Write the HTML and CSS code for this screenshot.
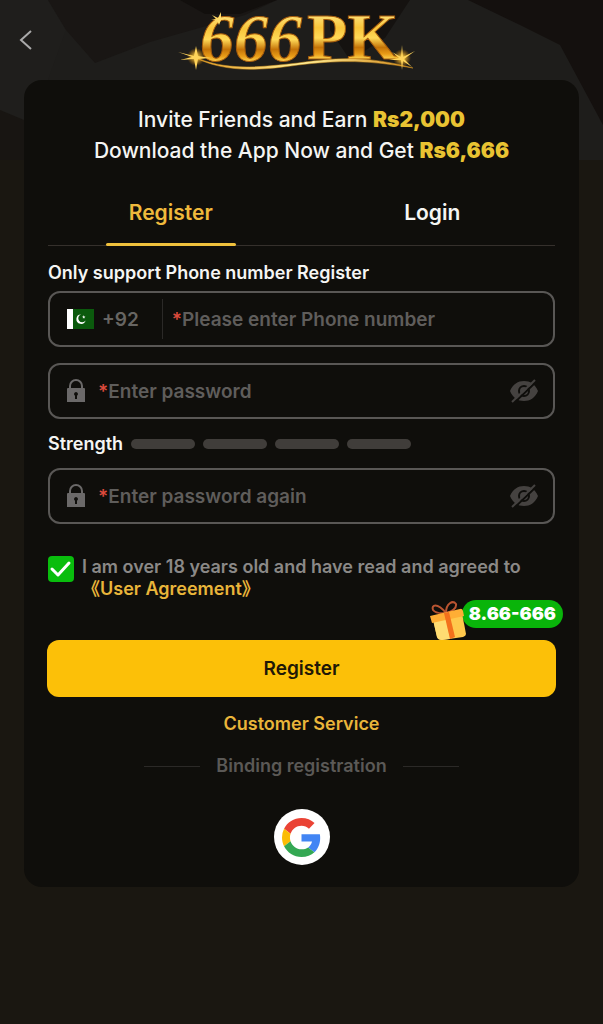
FILE: index.html
```html
<!DOCTYPE html>
<html lang="en">
  <head>
    <meta charset="UTF-8" />
    <meta name="viewport" content="width=device-width, initial-scale=1.0" />
    <title>666PK - Register</title>
    <link rel="stylesheet" href="styles.css">
  </head>
  <body>
    <svg class="backdrop" viewBox="0 0 603 160" preserveAspectRatio="none" aria-hidden="true">
      <rect width="603" height="160" fill="#1e1d1b"/>
      <path d="M0 0H48L66 30L48 80L24 130L0 110Z" fill="#1f1e1c"/>
      <path d="M48 0H277L245 15L150 42L95 63L66 30Z" fill="#191614"/>
      <path d="M180 0H277L240 14L205 14Z" fill="#120f0d"/>
      <path d="M330 0H410L385 38L350 60L330 30Z" fill="#151210"/>
      <path d="M468 0H603V125L560 45L520 25Z" fill="#14100e"/>
      <path d="M0 110L24 120V160H0Z" fill="#181512"/>
    </svg>

    <header class="header">
      <button class="back" aria-label="Back">
        <svg width="14" height="22" viewBox="0 0 14 22"><path d="M12 2L2 11L12 20" fill="none" stroke="#aaa" stroke-width="2"/></svg>
      </button>
      <svg class="logo" width="244" height="80" viewBox="0 0 244 80" role="img" aria-label="666PK">
        <defs>
          <linearGradient id="gold" x1="0" y1="0" x2="0" y2="1">
            <stop offset="0.15" stop-color="#ffe98a"/>
            <stop offset="0.38" stop-color="#f9c53a"/>
            <stop offset="0.52" stop-color="#ffd957"/>
            <stop offset="0.65" stop-color="#c57408"/>
            <stop offset="0.74" stop-color="#e99c17"/>
            <stop offset="0.82" stop-color="#ffdc59"/>
          </linearGradient>
          <linearGradient id="swoosh">
            <stop offset="0" stop-color="#e79b1f"/>
            <stop offset="0.5" stop-color="#fff09a"/>
            <stop offset="1" stop-color="#d48b1c"/>
          </linearGradient>
          <radialGradient id="glow">
            <stop offset="0" stop-color="#fff3a0"/>
            <stop offset="0.3" stop-color="#ffc93c" stop-opacity="0.8"/>
            <stop offset="1" stop-color="#e68a00" stop-opacity="0"/>
          </radialGradient>
        </defs>
        <text class="logo-digits" x="20" y="61">666</text>
        <text class="logo-letters" x="127" y="59">PK</text>
        <path d="M10 55C45 72 80 67 118 63C158 57 188 56 233 68C188 60 160 60 118 65C78 71 42 73 10 55Z" fill="url(#swoosh)" stroke="#dc9a24" stroke-width="0.5"/>
        <circle cx="16" cy="57" r="9" fill="url(#glow)"/>
        <path d="M-2 52L14 56L16 46L18 56L31 58L18 59L16 70L14 59L0 60L12 57Z" fill="#ffd45a"/>
        <circle cx="222" cy="58" r="9" fill="url(#glow)"/>
        <path d="M212 52L221 57L222 45L223 57L235 51L224 59L232 67L223 61L222 70L221 60L209 60L219 58Z" fill="#ffd45a"/>
        <path d="M32 15L38 18L41 12L41 18L47 19L41 20L39 25L37 20L31 20L36 19Z" fill="#ffdc69"/>
      </svg>
    </header>

    <main class="card">
      <div class="promo">
        <p>Invite Friends and Earn <b>Rs2,000</b></p>
        <p>Download the App Now and Get <b>Rs6,666</b></p>
      </div>

      <div class="tabs">
        <button class="tab active">Register</button>
        <button class="tab">Login</button>
      </div>

      <form>
        <label class="title" for="phone">Only support Phone number Register</label>
        <div class="field">
          <div class="country">
            <svg width="27" height="20" viewBox="0 0 27 20" aria-hidden="true">
              <rect width="27" height="20" fill="#0b5a0d"/>
              <rect width="6" height="20" fill="#fff"/>
              <path d="M14 5.5A4.7 4.7 0 1 0 18.6 11.5A4 4 0 1 1 14 5.5Z" fill="#fff"/>
              <path d="M16.5 6L17.1 7.4L18.4 7.2L17.5 8.2L18 9.4L16.8 8.8L15.9 9.7L16.1 8.4L15 7.8L16.3 7.5Z" fill="#fff"/>
            </svg>
            <span>+92</span>
          </div>
          <span class="star">*</span>
          <input id="phone" type="tel" placeholder="Please enter Phone number">
        </div>

        <div class="field password">
          <svg class="lock" width="18" height="24" viewBox="0 0 18 24" aria-hidden="true">
            <path d="M3 10V7A6 6 0 0 1 15 7V10" fill="none" stroke="#6b6969" stroke-width="2"/>
            <path d="M1 9H17Q18 9 18 10V23H0V10Q0 9 1 9ZM9 13A2 2 0 0 0 8 16.7V20H10V16.7A2 2 0 0 0 9 13Z" fill="#6b6969"/>
          </svg>
          <span class="star">*</span>
          <input type="password" placeholder="Enter password" aria-label="Enter password">
          <button type="button" class="eye" aria-label="Show password">
            <svg width="30" height="24" viewBox="0 0 30 24">
              <mask id="slash">
                <rect width="30" height="24" fill="#fff"/>
                <path d="M4.5 24.5L27.5 2.5" stroke="#000" stroke-width="2"/>
              </mask>
              <g mask="url(#slash)" fill="#454240">
                <path fill-rule="evenodd" d="M1 12C4 5 9 2 15 2S26 5 29 12C26 19 21 22 15 22S4 19 1 12ZM15 6A6 6 0 1 0 15 18A6 6 0 0 0 15 6Z"/>
                <circle cx="15" cy="12" r="4"/>
              </g>
              <path d="M3 23L26 1" stroke="#454240" stroke-width="2"/>
            </svg>
          </button>
        </div>

        <div class="strength">
          <span>Strength</span>
          <i></i><i></i><i></i><i></i>
        </div>

        <div class="field">
          <svg class="lock" width="18" height="24" viewBox="0 0 18 24" aria-hidden="true">
            <path d="M3 10V7A6 6 0 0 1 15 7V10" fill="none" stroke="#6b6969" stroke-width="2"/>
            <path d="M1 9H17Q18 9 18 10V23H0V10Q0 9 1 9ZM9 13A2 2 0 0 0 8 16.7V20H10V16.7A2 2 0 0 0 9 13Z" fill="#6b6969"/>
          </svg>
          <span class="star">*</span>
          <input type="password" placeholder="Enter password again" aria-label="Enter password again">
          <button type="button" class="eye" aria-label="Show password">
            <svg width="30" height="24" viewBox="0 0 30 24">
              <g mask="url(#slash)" fill="#454240">
                <path fill-rule="evenodd" d="M1 12C4 5 9 2 15 2S26 5 29 12C26 19 21 22 15 22S4 19 1 12ZM15 6A6 6 0 1 0 15 18A6 6 0 0 0 15 6Z"/>
                <circle cx="15" cy="12" r="4"/>
              </g>
              <path d="M3 23L26 1" stroke="#454240" stroke-width="2"/>
            </svg>
          </button>
        </div>

        <div class="agree">
          <span class="check">
            <input type="checkbox" id="agree" checked>
            <svg width="26" height="26" viewBox="0 0 26 26" aria-hidden="true"><path d="M4 13L10 19L21 7" fill="none" stroke="#fff" stroke-width="3" stroke-linecap="round" stroke-linejoin="round"/></svg>
          </span>
          <div>
            <label for="agree">I am over 18 years old and have read and agreed to</label>
            <a href="#">《User Agreement》</a>
          </div>
        </div>

        <div class="submit">
          <button type="submit" class="register-btn">Register</button>
          <div class="bonus">
            <svg width="38" height="40" viewBox="0 0 38 40" aria-hidden="true">
              <g fill="none" stroke="#b95431" stroke-width="2">
                <path d="M17 13C8 2 2 5 4 10Q7 14 17 13Z"/>
                <path d="M17 13C17 3 24 0 27 4Q28 10 17 13Z"/>
              </g>
              <path d="M4 19L33 13L37 34Q37 36 34 37L13 40Q9 40 8 37Z" fill="#ffc84c"/>
              <path d="M4 20L17 18L21 39L13 40Q9 40 8 37Z" fill="#ffdc72"/>
              <path d="M1 16L31 9Q33 8 34 11L35 16L3 23Z" fill="#ffae35"/>
              <path d="M15 13L20 12L26 37L21 39Z" fill="#f3701c"/>
            </svg>
            <span>8.66-666</span>
          </div>
        </div>
      </form>

      <a class="service" href="#">Customer Service</a>
      <div class="binding"><span>Binding registration</span></div>
      <button class="google" aria-label="Register with Google">
        <svg width="39" height="39" viewBox="0 0 48 48">
          <path fill="#ea4335" d="M24 9.5c3.54 0 6.71 1.22 9.21 3.6l6.85-6.85C35.9 2.38 30.47 0 24 0 14.62 0 6.51 5.38 2.56 13.22l7.98 6.19C12.43 13.72 17.74 9.5 24 9.5z"/>
          <path fill="#4285f4" d="M46.98 24.55c0-1.57-.15-3.09-.38-4.55H24v9.02h12.94c-.58 2.96-2.26 5.48-4.78 7.18l7.73 6c4.51-4.18 7.09-10.36 7.09-17.65z"/>
          <path fill="#fbbc05" d="M10.53 28.59A14.5 14.5 0 0 1 9.77 24c0-1.6.27-3.14.76-4.59l-7.98-6.19A23.9 23.9 0 0 0 0 24c0 3.88.92 7.54 2.56 10.78z"/>
          <path fill="#34a853" d="M24 48c6.48 0 11.93-2.13 15.89-5.81l-7.73-6C30.01 37.64 27.24 38.49 24 38.49c-6.26 0-11.57-4.22-13.47-9.9l-7.98 6.19C6.51 42.62 14.62 48 24 48z"/>
        </svg>
      </button>
    </main>
  </body>
</html>
```

FILE: styles.css
```css
* {
  margin: 0;
  padding: 0;
  box-sizing: border-box;
}

body {
  min-height: 100vh;
  background: #1a1711;
  font-family: Inter, "Noto Sans CJK SC", sans-serif;
  font-size: 18px;
  font-weight: 600;
  color: #f5f5f3;
}

button,
input {
  font: inherit;
  color: inherit;
  background: none;
  border: none;
  outline: none;
}

button {
  cursor: pointer;
}

a {
  color: #e9b53a;
  text-decoration: none;
}

svg {
  display: block;
}

.backdrop {
  position: absolute;
  top: 0;
  left: 0;
  width: 100%;
  height: 160px;
  z-index: -1;
}

.header {
  display: grid;
  grid-template-columns: 52px 1fr 52px;
  align-items: center;
  height: 80px;
}

.back {
  display: flex;
  justify-content: center;
}

.logo {
  justify-self: center;
  overflow: visible;
}

.logo text {
  font-family: "Liberation Serif", serif;
  font-weight: bold;
  fill: url(#gold);
  stroke: #a65b0c;
  stroke-width: 1;
}

.logo .logo-digits {
  font-size: 68px;
  font-style: italic;
}

.logo .logo-letters {
  font-size: 66px;
}

.card {
  margin: 0 24px;
  padding: 24px 24px 22px;
  background: #0f0e0b;
  border-radius: 18px;
}

.promo {
  font-size: 21px;
  font-weight: 500;
  line-height: 31px;
  text-align: center;
}

.promo b {
  font-weight: 900;
  color: #e9c332;
}

.tabs {
  display: grid;
  grid-template-columns: 1fr 1fr;
  gap: 16px;
  margin-top: 14px;
  border-bottom: 1px solid #35302c;
}

.tab {
  position: relative;
  height: 65px;
  font-size: 21px;
}

.tab.active {
  color: #efb93c;
}

.tab.active::after {
  content: "";
  position: absolute;
  left: 50%;
  bottom: -1px;
  width: 130px;
  height: 3px;
  margin-left: -65px;
  border-radius: 2px;
  background: #efc03c;
}

.title {
  display: block;
  margin: 15px 0 6px;
  line-height: 24px;
}

.field {
  display: flex;
  align-items: center;
  height: 56px;
  padding: 0 14px 0 17px;
  border: 2px solid #595755;
  border-radius: 12px;
  font-size: 19px;
}

.field.password {
  margin-top: 16px;
}

.field input {
  flex: 1;
  min-width: 0;
}

.field input::placeholder {
  color: #5f5d5b;
  opacity: 1;
}

.country {
  display: flex;
  align-items: center;
  gap: 8px;
  height: 40px;
  padding-right: 23px;
  margin-right: 9px;
  border-right: 1px solid #2b2927;
  color: #676562;
}

.star {
  color: #dc4a3c;
}

.lock {
  margin-right: 13px;
}

.strength {
  display: flex;
  align-items: center;
  gap: 8px;
  height: 49px;
}

.strength i {
  width: 64px;
  height: 10px;
  border-radius: 5px;
  background: #403d3a;
}

.agree {
  display: flex;
  gap: 8px;
  margin-top: 32px;
  line-height: 22px;
  color: #8b8987;
}

.agree label,
.agree a {
  display: block;
}

.check {
  display: grid;
  width: 26px;
  height: 26px;
}

.check input {
  grid-area: 1 / 1;
  appearance: none;
  border-radius: 4px;
}

.check input:checked {
  background: #09bd0d;
}

.check svg {
  grid-area: 1 / 1;
  pointer-events: none;
}

.submit {
  position: relative;
  margin: 40px -1px 0;
}

.register-btn {
  display: block;
  width: 100%;
  height: 57px;
  border-radius: 12px;
  background: #fcc008;
  color: #211806;
  font-size: 19px;
}

/* bonus tag hangs over the button's top right corner */
.bonus {
  position: absolute;
  right: -7px;
  bottom: 57px;
  display: flex;
  align-items: flex-start;
}

.bonus svg {
  position: relative;
  z-index: 1;
  margin-right: -5px;
}

.bonus span {
  padding: 0 7px;
  border-radius: 14px;
  background: #09b40a;
  color: #fff;
  font-weight: 900;
  line-height: 28px;
}

.service {
  display: block;
  width: fit-content;
  margin: 15px auto 0;
  line-height: 24px;
}

.binding {
  display: flex;
  align-items: center;
  justify-content: center;
  gap: 16px;
  margin-top: 18px;
  line-height: 24px;
  color: #5b5956;
}

.binding::before,
.binding::after {
  content: "";
  width: 56px;
  height: 1px;
  background: #2b2927;
}

.google {
  display: flex;
  align-items: center;
  justify-content: center;
  width: 56px;
  height: 56px;
  margin: 31px auto 0;
  border-radius: 50%;
  background: #fff;
}
```
